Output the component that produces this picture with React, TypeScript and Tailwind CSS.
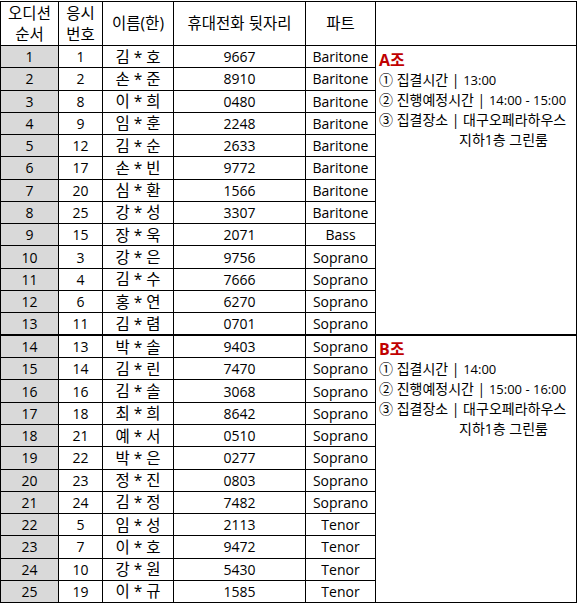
const ROWS: [number, number, string, string, string][] = [
  [1, 1, '김 * 호', '9667', 'Baritone'],
  [2, 2, '손 * 준', '8910', 'Baritone'],
  [3, 8, '이 * 희', '0480', 'Baritone'],
  [4, 9, '임 * 훈', '2248', 'Baritone'],
  [5, 12, '김 * 순', '2633', 'Baritone'],
  [6, 17, '손 * 빈', '9772', 'Baritone'],
  [7, 20, '심 * 환', '1566', 'Baritone'],
  [8, 25, '강 * 성', '3307', 'Baritone'],
  [9, 15, '장 * 욱', '2071', 'Bass'],
  [10, 3, '강 * 은', '9756', 'Soprano'],
  [11, 4, '김 * 수', '7666', 'Soprano'],
  [12, 6, '홍 * 연', '6270', 'Soprano'],
  [13, 11, '김 * 렴', '0701', 'Soprano'],
  [14, 13, '박 * 솔', '9403', 'Soprano'],
  [15, 14, '김 * 린', '7470', 'Soprano'],
  [16, 16, '김 * 솔', '3068', 'Soprano'],
  [17, 18, '최 * 희', '8642', 'Soprano'],
  [18, 21, '예 * 서', '0510', 'Soprano'],
  [19, 22, '박 * 은', '0277', 'Soprano'],
  [20, 23, '정 * 진', '0803', 'Soprano'],
  [21, 24, '김 * 정', '7482', 'Soprano'],
  [22, 5, '임 * 성', '2113', 'Tenor'],
  [23, 7, '이 * 호', '9472', 'Tenor'],
  [24, 10, '강 * 원', '5430', 'Tenor'],
  [25, 19, '이 * 규', '1585', 'Tenor'],
];

const GROUPS = {
  1: { label: 'A', gather: '13:00', run: '14:00 - 15:00' },
  14: { label: 'B', gather: '14:00', run: '15:00 - 16:00' },
} as Record<number, { label: string; gather: string; run: string }>;

function GroupNote({ label, gather, run }: { label: string; gather: string; run: string }) {
  return (
    <div className="text-[14px] leading-[20px] text-black whitespace-nowrap">
      <p className="text-[16px] font-bold text-[#c00000]">{label}조</p>
      <p>① 집결시간 | <span className="text-[13px]">{gather}</span></p>
      <p>② 진행예정시간 | <span className="text-[13px]">{run}</span></p>
      <p>③ 집결장소 | 대구오페라하우스</p>
      <p className="pl-[80px] leading-[19px]">지하1층 그린룸</p>
    </div>
  );
}

export default function App() {
  const cell = 'border border-black text-center p-0';
  return (
    <div className="bg-white w-[578px] h-[605px] pt-px" style={{ fontFamily: '"Open Sans", "Noto Sans CJK KR", sans-serif' }}>
      <table className="border-collapse table-fixed w-[576px] text-[14px] text-black">
        <colgroup>
          <col className="w-[58px]" />
          <col className="w-[44px]" />
          <col className="w-[71px]" />
          <col className="w-[132px]" />
          <col className="w-[70px]" />
          <col className="w-[201px]" />
        </colgroup>
        <thead>
          <tr className="h-[44px] text-[15.5px]">
            <th className={`${cell} font-normal leading-[21px]`}>오디션<br />순서</th>
            <th className={`${cell} font-normal leading-[21px]`}>응시<br />번호</th>
            <th className={`${cell} font-normal`}>이름(한)</th>
            <th className={`${cell} font-normal`}>휴대전화 뒷자리</th>
            <th className={`${cell} font-normal`}>파트</th>
            <th className={cell}></th>
          </tr>
        </thead>
        <tbody>
          {ROWS.map(([order, num, name, phone, part]) => {
            const split = order === 13 ? ' border-b-2' : '';
            const group = GROUPS[order];
            return (
              <tr key={order} className="h-[22.28px]">
                <td className={`${cell}${split} bg-[#d9d9d9]`}>{order}</td>
                <td className={`${cell}${split}`}>{num}</td>
                <td className={`${cell}${split} text-[15.5px] leading-[20px]`}>{name}</td>
                <td className={`${cell}${split}`}>{phone}</td>
                <td className={`${cell}${split}`}>{part}</td>
                {group && (
                  <td
                    rowSpan={order === 1 ? 13 : 12}
                    className={`border border-black align-top text-left pl-[3px] ${order === 1 ? 'pt-[4px] border-b-2' : 'pt-[3px]'}`}
                  >
                    <GroupNote {...group} />
                  </td>
                )}
              </tr>
            );
          })}
        </tbody>
      </table>
    </div>
  );
}
